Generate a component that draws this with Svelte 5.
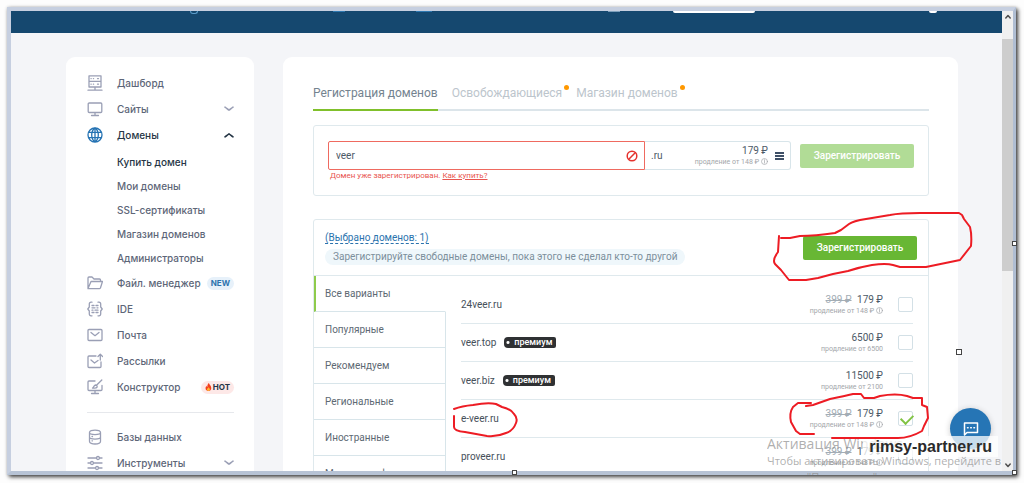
<script>
  const menu = [
    { icon: 'server', label: 'Дашборд' },
    { icon: 'monitor', label: 'Сайты', arrow: 'down' },
    {
      icon: 'globe', label: 'Домены', arrow: 'up', active: true,
      items: ['Купить домен', 'Мои домены', 'SSL-сертификаты', 'Магазин доменов', 'Администраторы']
    },
    { icon: 'folder', label: 'Файл. менеджер', badge: 'NEW' },
    { icon: 'ide', label: 'IDE' },
    { icon: 'mail', label: 'Почта' },
    { icon: 'send', label: 'Рассылки' },
    { icon: 'builder', label: 'Конструктор', badge: 'HOT' },
    { divider: true },
    { icon: 'database', label: 'Базы данных' },
    { icon: 'tools', label: 'Инструменты', arrow: 'down' }
  ];

  // stroke paths on a 16x16 grid
  const icons = {
    server: 'M2 .8h12v5.6H2zM2 6.4h12V12H2zM4 3.6h.2M6.400 3.600h.2M4 9.200h.2M6.400 9.200h.2M10.500 3.600h1M10.500 9.200h1M8 12v3M1 15.200h14',
    monitor: 'M2.200 2h11.600a1 1 0 0 1 1 1v7.500a1 1 0 0 1-1 1H2.200a1 1 0 0 1-1-1V3a1 1 0 0 1 1-1zM8 11.500v3M4.500 14.500h7',
    globe: 'M8 1a7 7 0 1 0 0 14A7 7 0 0 0 8 1zM8 1C3.600 4 3.600 12 8 15M8 1c4.400 3 4.400 11 0 14M8 1v14M1.800 5.300h12.400M1.800 10.700h12.400',
    folder: 'M1 13V3a1 1 0 0 1 1-1h3l2 2h5.500a1 1 0 0 1 1 1v1.500M1 13.500l3-7h11.500l-2 6.300a1 1 0 0 1-1 .9H1z',
    ide: 'M5 1.200H4A1.700 1.700 0 0 0 2.300 3v3L.8 8l1.500 2v3A1.700 1.700 0 0 0 4 14.800h1M11 1.200h1A1.700 1.700 0 0 1 13.700 3v3L15.200 8l-1.500 2v3a1.700 1.700 0 0 1-1.700 1.800h-1M5 4.500h2M9 4.500h2M5 6.800h3M10 6.800h1M5 9.200h1M8 9.200h3M5 11.500h2M9 11.500h2',
    mail: 'M2 2.500h12a1 1 0 0 1 1 1v9a1 1 0 0 1-1 1H2a1 1 0 0 1-1-1v-9a1 1 0 0 1 1-1zM4 5.500l4 3.200 4-3.200',
    send: 'M9 3H2a1 1 0 0 0-1 1v9.500a1 1 0 0 0 1 1h11a1 1 0 0 0 1-1V9M4 7l3.500 3L11 7.500M13.300 7V1.500M11 3.500l2.300-2.300 2.300 2.300',
    builder: 'M8 2H2a1 1 0 0 0-1 1v7.500a1 1 0 0 0 1 1h12a1 1 0 0 0 1-1V6.500M8 11.500v3M4.500 14.500h7M14.800 1L9.500 6.300M8.500 6a1.800 1.800 0 0 1 1.600 2.200C9.400 9.400 7.500 9.300 5.500 9c1.600-.6 1-2.600 3-3z',
    database: 'M2.500 3.500c0-3.300 11-3.300 11 0v9c0 3.300-11 3.300-11 0zM2.500 3.500c0 2.800 11 2.800 11 0M2.500 8c0 2.800 11 2.800 11 0M5 7.500h.5M5 11.800h.5',
    tools: 'M1 3h8M13 3h2M1 8h2M7 8h8M1 13h7M12 13h3M11 1.500a1.500 1.500 0 1 0 0 3 1.500 1.500 0 0 0 0-3zM5 6.500a1.500 1.500 0 1 0 0 3 1.500 1.500 0 0 0 0-3zM10 11.500a1.500 1.500 0 1 0 0 3 1.500 1.500 0 0 0 0-3z'
  };

  const tabs = [
    { label: 'Регистрация доменов', active: true },
    { label: 'Освобождающиеся', dot: true },
    { label: 'Магазин доменов', dot: true }
  ];

  const filters = ['Все варианты', 'Популярные', 'Рекомендуем', 'Региональные', 'Иностранные', 'Мир, география, места'];

  let domains = $state([
    { name: '24veer.ru', old: '399 ₽', price: '179 ₽', renew: '148 ₽', info: true, checked: false },
    { name: 'veer.top', premium: true, price: '6500 ₽', renew: '6500', checked: false },
    { name: 'veer.biz', premium: true, price: '11500 ₽', renew: '2100', checked: false },
    { name: 'e-veer.ru', old: '399 ₽', price: '179 ₽', renew: '148 ₽', info: true, checked: true, marked: true },
    { name: 'proveer.ru', old: '399 ₽', price: '179 ₽', renew: '148 ₽', info: true, checked: false }
  ]);

  let query = $state('veer');
  let current = $state('Все варианты');
  let selected = $derived(domains.filter((d) => d.checked).length);
</script>

{#snippet info()}
  <svg class="info" viewBox="0 0 8 8"><circle cx="4" cy="4" r="3.4" /><path d="M4 3.500v2.300M4 2v.7" /></svg>
{/snippet}

{#snippet chevron(dir)}
  <svg class="chevron" class:up={dir === 'up'} viewBox="0 0 10 6"><path d="M1 1.200c1.500 1 2.500 2 4 3 1.500-1 2.500-2 4-3" /></svg>
{/snippet}

<div class="frame">
  <div class="screen">
    <div class="page">
      <header>
        <span class="logo"></span>
        <span class="bit first"></span>
        <span class="bit second"></span>
        <span class="bit third"></span>
        <span class="pill"></span>
        <span class="avatar"></span>
      </header>

      <div class="content">
        <nav class="sidebar">
          {#each menu as item}
            {#if item.divider}
              <hr />
            {:else}
              <a href="#menu" class="item" class:active={item.active}>
                <svg class="icon" viewBox="0 0 16 16"><path d={icons[item.icon]} /></svg>
                <span>{item.label}</span>
                {#if item.arrow}
                  {@render chevron(item.arrow)}
                {/if}
                {#if item.badge === 'NEW'}
                  <b class="badge">NEW</b>
                {:else if item.badge === 'HOT'}
                  <b class="badge hot">
                    <svg viewBox="0 0 8 10"><path d="M4.500 0c.5 2 3 3.500 3 6.300C7.500 8.700 6 10 4 10S.3 8.700.3 6.500C.3 5 1 4 1.700 3.300c0 1 .3 1.500.8 1.700C2.500 3 3 1 4.500 0z" fill="#f4401c" /><path d="M4.300 5c.2 1.300 1.500 1.800 1.500 3.200C5.800 9.300 5 9.900 4 9.900s-1.900-.6-1.900-1.800C2.100 6.800 3.800 6.500 4.300 5z" fill="#ffb52e" /></svg>
                    HOT
                  </b>
                {/if}
              </a>
              {#if item.items}
                <ul class="sub">
                  {#each item.items as sub, i}
                    <li><a href="#domains" class:active={i === 0}>{sub}</a></li>
                  {/each}
                </ul>
              {/if}
            {/if}
          {/each}
        </nav>

        <main>
          <div class="tabs">
            {#each tabs as tab}
              <a href="#tab" class:active={tab.active} class:dot={tab.dot}>{tab.label}</a>
            {/each}
          </div>

          <form class="card search" onsubmit={(e) => e.preventDefault()}>
            <div class="row">
              <div class="field">
                <input type="text" aria-label="Домен" bind:value={query} />
                <svg viewBox="0 0 12 12"><circle cx="6" cy="6" r="4.800" /><path d="M2.800 9.200l6.400-6.400" /></svg>
              </div>
              <div class="zone">
                <span class="tld">.ru</span>
                <div class="price">
                  <span class="sum">179 ₽</span>
                  <span class="renew">продление от 148 ₽ {@render info()}</span>
                </div>
                <button type="button" class="burger" aria-label="Зоны"><i></i><i></i><i></i></button>
              </div>
              <button type="submit" class="btn pale">Зарегистрировать</button>
            </div>
            <p class="error">Домен уже зарегистрирован. <a href="#how">Как купить?</a></p>
          </form>

          <section class="card">
            <div class="head">
              <div class="summary">
                <a class="chosen" href="#chosen">(Выбрано доменов: {selected})</a>
                <p class="hint">Зарегистрируйте свободные домены, пока этого не сделал кто-то другой</p>
              </div>
              <button type="button" class="btn">Зарегистрировать</button>
              <svg class="mark mark-button" viewBox="770 208 205 77">
                <path d="M779 236L778 252Q772 260 775 264L781 270L789 280H806L818 278L833 274L848 271Q860 267 872 265Q886 263 893 265L900 267H926L960 260L971 246Q972 235 970 227L964 219L962 215L959 213H920Q900 213 890 215L866 219Q853 221 849 224L841 230L835 233Q815 236 800 236L790 238H781" />
              </svg>
            </div>

            <div class="body">
              <div class="filters">
                {#each filters as filter}
                  <button type="button" class:active={filter === current} onclick={() => (current = filter)}>{filter}</button>
                {/each}
              </div>

              <ul class="list">
                {#each domains as domain, i}
                  <li>
                    <label for="domain-{i}">{domain.name}</label>
                    {#if domain.premium}
                      <span class="premium">премиум</span>
                    {/if}
                    <div class="price">
                      <span class="sum">
                        {#if domain.old}<s>{domain.old}</s>{/if}
                        {domain.price}
                      </span>
                      <span class="renew">
                        продление от {domain.renew}
                        {#if domain.info}{@render info()}{/if}
                      </span>
                    </div>
                    <input id="domain-{i}" type="checkbox" bind:checked={domain.checked} />
                    {#if domain.marked}
                      <svg class="mark mark-name" viewBox="450 400 70 40">
                        <path d="M454 409Q462 406 473 405Q488 402 496 404L502 407Q511 409 514 414Q518 418 516 423Q513 431 506 433Q497 437 487 436L465 432Q454 431 454 427V416" />
                      </svg>
                      <svg class="mark mark-price" viewBox="786 390 146 52">
                        <path d="M806 406L813 405L830 399Q845 396 853 394H861L864 398H874L880 396Q896 393 907 396L913 398H922V405L927 407L928 418L924 426L922 431Q910 438 898 438H832M814 434H800L796 431L791 422Q789 413 793 407L798 403H811" />
                      </svg>
                    {/if}
                  </li>
                {/each}
              </ul>
            </div>
          </section>
        </main>
      </div>
    </div>

    <div class="scrollbar">
      <svg viewBox="0 0 6 5"><path d="M.8 4L3 1.500 5.200 4" /></svg>
      <div class="thumb"></div>
      <svg class="down" viewBox="0 0 6 5"><path d="M.8 4L3 1.500 5.200 4" /></svg>
    </div>

    <button type="button" class="chat" aria-label="Чат">
      <svg viewBox="0 0 16 14"><path d="M1.500 13V1h13v9.500H4z" /><path d="M4.500 5.800h.6M7.700 5.800h.6M10.900 5.800h.6" /></svg>
    </button>
    <i class="handle inner"></i>
  </div>
  <div class="windows">
    <p class="title">Активация Windows</p>
    <p>Чтобы активировать Windows, перейдите в<br />раздел "Параметры".</p>
  </div>
  <div class="site">rimsy-partner.ru</div>
  <i class="handle right"></i>
  <i class="handle bottom"></i>
  <i class="handle corner"></i>
</div>

<style>
  :global(body) {
    background: #fdfdfd;
  }
  .frame, .frame * {
    box-sizing: border-box;
  }
  .frame {
    position: relative;
    height: calc(100vh - 15px);
    margin: 7px 8px 8px 7px;
    border: 4px solid #c6cfe0;
    border-right: 3px solid #b0bed3;
    border-bottom-color: #b7c3d5;
    box-shadow: 2px 2px 4px rgba(0, 0, 0, 0.75), 0 0 3px rgba(0, 0, 0, 0.15);
    font-family: Roboto, sans-serif;
    color: #4c5966;
  }
  .screen {
    position: relative;
    display: flex;
    height: 100%;
    overflow: hidden;
  }
  .page {
    flex: 1;
    min-width: 0;
    background: #f4f5f8;
  }
  a {
    color: inherit;
    text-decoration: none;
  }
  ul {
    list-style: none;
    margin: 0;
    padding: 0;
  }
  p {
    margin: 0;
  }
  button {
    font-family: inherit;
    border: 0;
    padding: 0;
    cursor: pointer;
  }
  svg {
    flex: none;
    fill: none;
    stroke-linecap: round;
    stroke-linejoin: round;
  }

  header {
    display: flex;
    height: 22px;
    padding: 0 65px 0 179px;
    background: #15486f;
  }
  .logo {
    width: 8px;
    height: 3px;
    border: 1px solid #5b9cca;
    border-top: 0;
    border-radius: 0 0 4px 4px;
  }
  .bit {
    height: 1px;
    width: 12px;
    background: #2e78b0;
  }
  .first {
    margin-left: 135px;
  }
  .second {
    width: 16px;
    margin-left: 71px;
  }
  .third {
    margin-left: 176px;
    background: #7d9fbb;
  }
  .pill {
    width: 82px;
    height: 2px;
    margin-left: 53px;
    background: #fff;
    border-radius: 0 0 4px 4px;
  }
  .avatar {
    width: 8px;
    height: 2px;
    margin-left: auto;
    background: #fff;
    border-radius: 0 0 4px 4px;
  }

  .content {
    display: flex;
    gap: 29px;
    padding: 24px 44px 0 55px;
  }

  .sidebar {
    flex: none;
    width: 188px;
    padding: 13px 20px 20px 21px;
    background: #fff;
    border-radius: 9px;
    font-family: Inter, sans-serif;
    font-size: 10px;
    font-weight: 500;
    color: #5d6678;
  }
  .item {
    display: flex;
    align-items: center;
    height: 26px;
    white-space: nowrap;
  }
  .icon {
    width: 16px;
    height: 16px;
    margin-right: 14px;
    stroke: #9a9fb5;
    stroke-width: 1.3;
  }
  .item.active, .sub .active {
    color: #253545;
  }
  .item.active .icon {
    stroke: #2573b3;
  }
  .chevron {
    width: 10px;
    height: 6px;
    margin-left: auto;
    stroke: #9a9fb5;
    stroke-width: 1.6;
  }
  .chevron.up {
    transform: rotate(180deg);
    stroke: #253545;
  }
  .badge {
    margin-left: auto;
    padding: 0 4px;
    border-radius: 7px;
    background: #e7f1fa;
    color: #2b73ae;
    font-size: 8px;
    line-height: 13px;
  }
  .hot {
    display: flex;
    align-items: center;
    gap: 1px;
    background: #fde8e7;
    color: #253545;
  }
  .hot svg {
    width: 7px;
    height: 8px;
  }
  .sub {
    padding: 2px 0 0 30px;
  }
  .sub a {
    display: block;
    line-height: 24px;
  }
  hr {
    margin: 12px 0 11px;
    border: 0;
    border-top: 1px solid #e6e8ec;
  }

  main {
    flex: 1;
    min-width: 0;
    padding: 26px 29px 30px 30px;
    background: #fff;
    border-radius: 9px;
  }
  .tabs {
    display: flex;
    gap: 14px;
    border-bottom: 2px solid #dce5ea;
    font-size: 12px;
    line-height: 20px;
    color: #bcc5cc;
  }
  .tabs a {
    position: relative;
    padding-bottom: 6px;
  }
  .tabs .active {
    margin-bottom: -2px;
    border-bottom: 2px solid #80c02b;
    color: #74838f;
  }
  .dot::after {
    content: '';
    position: absolute;
    top: 2px;
    right: -7px;
    width: 5px;
    height: 5px;
    border-radius: 50%;
    background: #ff9800;
  }

  .card {
    border: 1px solid #dfe9ed;
    border-radius: 3px;
  }
  .search {
    margin: 14px 0 23px;
    padding: 15px 14px 25px 14px;
  }
  .row {
    display: flex;
    align-items: center;
  }
  .field {
    display: flex;
    align-items: center;
    flex: 1;
    height: 29px;
    padding: 0 6px 0 7px;
    border: 1px solid #ef6a60;
    border-radius: 2px 0 0 2px;
  }
  .field input {
    flex: 1;
    min-width: 0;
    border: 0;
    padding: 0;
    outline: none;
    font: 10px Roboto, sans-serif;
    color: #4c5966;
  }
  .field svg {
    width: 12px;
    height: 12px;
    stroke: #e5322d;
    stroke-width: 1.5;
  }
  .zone {
    display: flex;
    align-items: center;
    width: 146px;
    height: 29px;
    margin-right: 9px;
    padding: 0 6px;
    border: 1px solid #d8e5ea;
    border-left: 0;
    border-radius: 0 3px 3px 0;
  }
  .tld {
    font-size: 10px;
  }
  .price {
    margin-left: auto;
    text-align: right;
    white-space: nowrap;
  }
  .sum, .renew {
    display: block;
  }
  .sum {
    font-size: 10px;
    line-height: 12px;
  }
  .sum s {
    margin-right: 3px;
    color: #a3adb5;
  }
  .renew {
    font-size: 7px;
    line-height: 10px;
    color: #a3a6aa;
  }
  .info {
    width: 7px;
    height: 7px;
    vertical-align: -1px;
    stroke: #a3a6aa;
    stroke-width: 0.8;
  }
  .burger {
    display: grid;
    gap: 1px;
    width: 9px;
    margin-left: 7px;
    background: none;
  }
  .burger i {
    height: 2px;
    background: #3e4f66;
  }
  .btn {
    width: 114px;
    height: 24px;
    border-radius: 2px;
    background: #68b734;
    color: #fff;
    font-size: 10px;
    font-weight: 500;
  }
  .pale {
    background: #b1dc96;
  }
  .error {
    height: 0;
    padding-left: 2px;
    font-size: 8px;
    line-height: 12px;
    color: #e8554f;
  }
  .error a {
    text-decoration: underline;
  }

  .head {
    position: relative;
    display: flex;
    align-items: center;
    justify-content: space-between;
    height: 56px;
    padding: 0 11px;
    border-bottom: 1px solid #dfe9ed;
  }
  .summary {
    padding-bottom: 4px;
  }
  .chosen {
    border-bottom: 1px dashed #2b73ae;
    color: #2b73ae;
    font-size: 10px;
    line-height: 12px;
  }
  .hint {
    margin-top: 4px;
    padding: 0 8px;
    border-radius: 8px;
    background: #eff7fb;
    color: #7c8f9b;
    font-size: 10px;
    line-height: 16px;
  }

  .body {
    display: flex;
  }
  .filters {
    width: 132px;
  }
  .filters button {
    display: block;
    width: 100%;
    height: 36px;
    padding-left: 11px;
    border-right: 1px solid #d8e5ea;
    border-bottom: 1px solid #d8e5ea;
    background: #fff;
    color: #5d6973;
    font-size: 10px;
    text-align: left;
  }
  .filters .active {
    padding-left: 9px;
    border-left: 2px solid #8fcb4c;
    border-right-color: transparent;
  }
  .list {
    flex: 1;
    padding: 10px 15px 10px 15px;
  }
  .list li {
    position: relative;
    display: flex;
    align-items: center;
    height: 38px;
    border-bottom: 1px solid #dfe9ed;
  }
  .list label {
    font-size: 10px;
    color: #46505a;
  }
  .premium {
    margin-left: 8px;
    padding: 0 4px 0 10px;
    border-radius: 4px 2px 2px 4px;
    background: radial-gradient(circle at 4px 50%, #fff 1px, #2f3133 2px);
    color: #fff;
    font-size: 9px;
    font-weight: 500;
    line-height: 11px;
  }
  input[type='checkbox'] {
    appearance: none;
    display: grid;
    width: 15px;
    height: 15px;
    margin: 0 0 0 15px;
    border: 1px solid #d3e0e6;
    border-radius: 2px;
    background: #fff;
  }
  input[type='checkbox']:checked::after {
    content: '';
    width: 10px;
    height: 6px;
    margin: 2px 0 0 2px;
    border: solid #80c343;
    border-width: 0 0 2px 2px;
    transform: rotate(-45deg);
  }

  .mark {
    position: absolute;
    z-index: 1;
    stroke: #ed1c24;
    stroke-width: 2;
    pointer-events: none;
  }
  .mark-button {
    top: -12px;
    right: -47px;
    width: 205px;
    height: 77px;
  }
  .mark-name {
    top: 0;
    left: -11px;
    width: 70px;
    height: 40px;
  }
  .mark-price {
    top: -10px;
    right: -19px;
    width: 146px;
    height: 52px;
  }

  .scrollbar {
    display: flex;
    flex-direction: column;
    align-items: center;
    width: 11px;
    padding: 3px 0;
    background: #f0f0f0;
  }
  .scrollbar svg {
    width: 6px;
    height: 5px;
    stroke: #505050;
    stroke-width: 1.5;
  }
  .scrollbar .down {
    margin-top: auto;
    transform: rotate(180deg);
  }
  .thumb {
    width: 100%;
    height: 51%;
    margin-top: 20px;
    background: #cdcdcd;
  }

  .chat {
    position: absolute;
    right: 22px;
    bottom: 22px;
    display: grid;
    place-items: center;
    width: 41px;
    height: 41px;
    border-radius: 50%;
    background: #2675b5;
    box-shadow: 0 1px 6px rgba(0, 0, 0, 0.2);
  }
  .chat svg {
    width: 16px;
    height: 14px;
    stroke: #fff;
    stroke-width: 1.5;
  }
  .windows {
    position: absolute;
    right: 11px;
    bottom: -4px;
    width: 235px;
    height: 40px;
    overflow: hidden;
    font: 11px/16px 'Open Sans', sans-serif;
    color: rgba(140, 140, 140, 0.7);
    white-space: nowrap;
    pointer-events: none;
  }
  .windows .title {
    font-size: 14px;
    line-height: 18px;
  }
  .site {
    position: absolute;
    right: 15px;
    bottom: 14px;
    padding: 0 6px;
    background: rgba(255, 255, 255, 0.75);
    color: #2b2b2b;
    font: bold 16px/21px 'Liberation Sans', sans-serif;
  }

  .handle {
    position: absolute;
    width: 5px;
    height: 5px;
    border: 1px solid #444;
    background: #fff;
  }
  .inner {
    right: 51px;
    top: 338px;
    width: 6px;
    height: 6px;
  }
  .right {
    right: -4px;
    top: 50%;
  }
  .bottom {
    bottom: -4px;
    left: 50%;
  }
  .corner {
    right: -4px;
    bottom: -4px;
  }
</style>
